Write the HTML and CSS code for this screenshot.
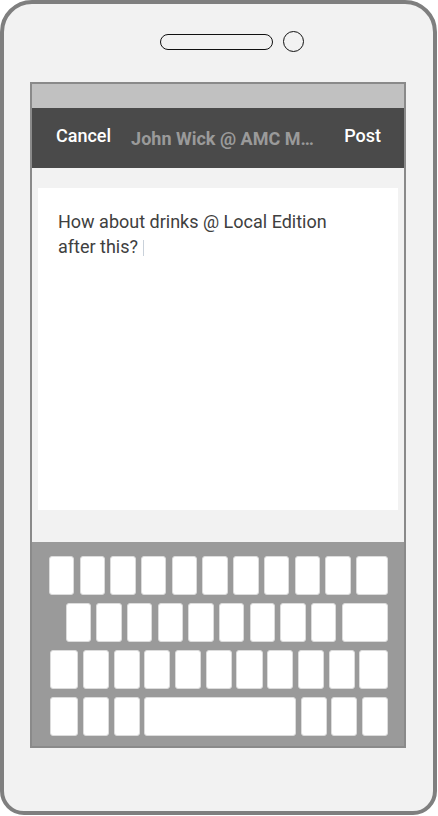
FILE: index.html
```html
<!DOCTYPE html>
<html>
<head>
<meta charset="utf-8">
<link rel="stylesheet" href="styles.css">
</head>
<body>
<div class="phone">
  <div class="top">
    <div class="speaker"></div>
    <div class="camera"></div>
  </div>
  <div class="screen">
    <div class="status"></div>
    <div class="header">
      <span class="btn">Cancel</span>
      <span class="title">John Wick @ AMC M…</span>
      <span class="btn post">Post</span>
    </div>
    <div class="content">
      <div class="card">
        <p class="msg">How about drinks @ Local Edition<br>after this? <span class="cursor"></span></p>
      </div>
    </div>
    <div class="keyboard">
      <div class="row row1">
        <div class="key"></div><div class="key"></div><div class="key"></div><div class="key"></div><div class="key"></div><div class="key"></div><div class="key"></div><div class="key"></div><div class="key"></div><div class="key"></div><div class="key grow"></div>
      </div>
      <div class="row row2">
        <div class="key"></div><div class="key"></div><div class="key"></div><div class="key"></div><div class="key"></div><div class="key"></div><div class="key"></div><div class="key"></div><div class="key"></div><div class="key grow"></div>
      </div>
      <div class="row row3">
        <div class="key edge"></div><div class="key grow"></div><div class="key grow"></div><div class="key grow"></div><div class="key grow"></div><div class="key grow"></div><div class="key grow"></div><div class="key grow"></div><div class="key grow"></div><div class="key grow"></div><div class="key edge"></div>
      </div>
      <div class="row row4">
        <div class="key edge"></div><div class="key mid"></div><div class="key mid"></div><div class="key grow"></div><div class="key mid"></div><div class="key mid"></div><div class="key mid"></div>
      </div>
    </div>
  </div>
</div>
</body>
</html>
```
FILE: styles.css
```css
* { box-sizing: border-box; }
html, body { margin: 0; padding: 0; background: #ffffff; }
body { width: 438px; height: 816px; overflow: hidden; font-family: Roboto, "Liberation Sans", sans-serif; }

.phone {
  width: 437px;
  height: 815px;
  border: 4px solid #7f7f7f;
  border-radius: 32px 32px 24px 24px;
  background: #f2f2f2;
  display: flex;
  flex-direction: column;
}

.top {
  height: 78px;
  display: flex;
  align-items: flex-start;
  padding-top: 27px;
  padding-left: 156px;
  gap: 10px;
}
.speaker {
  width: 113px;
  height: 16px;
  margin-top: 2.5px;
  border: 1.5px solid #111;
  border-radius: 8px;
}
.camera {
  width: 21px;
  height: 21px;
  border: 1.5px solid #111;
  border-radius: 50%;
}

.screen {
  margin-left: 26px;
  width: 376px;
  border: 2px solid #8a8a8a;
  display: flex;
  flex-direction: column;
}
.status { height: 24px; background: #c1c1c1; }
.header {
  height: 60px;
  background: #4a4a4a;
  display: flex;
  align-items: center;
  padding: 0 23px 0 24px;
}
.btn {
  color: #ffffff;
  font-size: 18px;
  font-weight: 500;
  margin-top: -5px;
}
.title {
  color: #9a9a9a;
  font-size: 18px;
  font-weight: 700;
  margin-left: 20px;
}
.post { margin-left: auto; }

.content {
  height: 374px;
  background: #f2f2f2;
  padding: 20px 6px 32px;
}
.card {
  height: 322px;
  background: #ffffff;
  padding: 21px 20px 0;
}
.msg {
  margin: 0;
  font-size: 18px;
  line-height: 25px;
  color: #404040;
}
.cursor {
  display: inline-block;
  width: 1px;
  height: 16px;
  background: #c9d1da;
  vertical-align: -3px;
}

.keyboard {
  height: 204px;
  background: #9a9a9a;
  padding: 14px 16px 0 17px;
  display: flex;
  flex-direction: column;
  gap: 8px;
}
.row { display: flex; height: 39px; }
.key {
  background: #ffffff;
  border: 1px solid #dcdcdc;
  border-radius: 3px;
  flex: 0 0 25.4px;
}
.key.grow { flex: 1 1 0; }
.key.edge { flex: 0 0 28.7px; }
.key.mid { flex: 0 0 26px; }
.row1, .row2 { gap: 5.3px; }
.row2 { padding-left: 16.6px; }
.row3, .row4 { gap: 4.7px; padding-left: 0.6px; }
```
